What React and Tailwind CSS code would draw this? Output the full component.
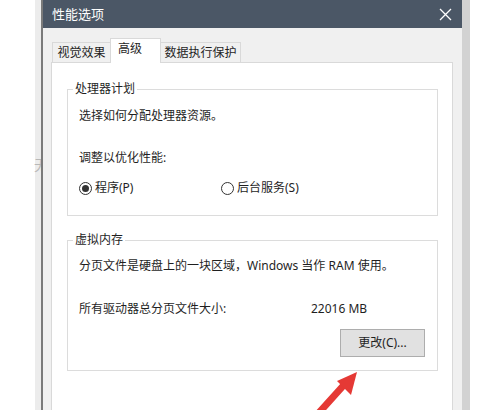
export default function App() {
  const font = { fontFamily: '"Noto Sans", "Noto Sans CJK SC", sans-serif' };
  return (
    <div className="relative w-[501px] h-[410px] overflow-hidden bg-white flex text-[12px] text-[#1f1f1f]" style={font}>
      {/* background strip left of the window */}
      <div className="w-[35px] shrink-0 bg-white" />
      <div className="w-[6px] shrink-0 bg-[#ececec]" />
      <div className="w-[2px] shrink-0 bg-[#7a7a7a]" />

      {/* window */}
      <div className="w-[419px] shrink-0 flex flex-col bg-[#f0f0f0]">
        {/* title bar */}
        <div className="h-[28px] shrink-0 bg-[#4b5766] flex items-center justify-between pl-[9px] pr-[9px]">
          <span className="text-white text-[13px] leading-none">性能选项</span>
          <svg width="13" height="13" viewBox="0 0 13 13" className="mr-[1px]">
            <path d="M1 1 L12 12 M12 1 L1 12" stroke="#ffffff" strokeWidth="1.3" />
          </svg>
        </div>

        <div className="flex-1 flex flex-col pl-[8px] pr-[9px]">
          {/* tabs */}
          <div className="flex items-end pt-[10px] pl-[1px] h-[34px] shrink-0">
            <div className="h-[20px] w-[58px] border border-r-0 border-b-0 border-[#d9d9d9] bg-[#f0f0f0] flex items-center justify-center leading-none">
              视觉效果
            </div>
            <div className="relative z-10 h-[25px] w-[51px] -mb-px border border-b-0 border-[#d9d9d9] bg-white flex items-center pl-[7px] pb-[4px] leading-none">
              高级
            </div>
            <div className="h-[20px] w-[80px] border border-l-0 border-b-0 border-[#d9d9d9] bg-[#f0f0f0] flex items-center justify-center leading-none">
              数据执行保护
            </div>
          </div>

          {/* panel */}
          <div className="flex-1 bg-white border border-b-0 border-[#d9d9d9] pl-[15px] pr-[14px] pt-[26px]">
            {/* processor scheduling */}
            <div className="relative border border-[#dcdcdc] h-[127px] pl-[11px] pt-[18px]">
              <span className="absolute -top-[9px] left-[5px] bg-white px-[2px] leading-[16px]">处理器计划</span>
              <div className="leading-[16px]">选择如何分配处理器资源。</div>
              <div className="leading-[16px] mt-[26px]">调整以优化性能:</div>
              <div className="flex items-center mt-[14px] leading-[16px]">
                <div className="flex items-center gap-[3px] w-[142px]">
                  <span className="w-[13px] h-[13px] rounded-full border border-[#333] flex items-center justify-center">
                    <span className="w-[7px] h-[7px] rounded-full bg-[#333]" />
                  </span>
                  <span>程序(P)</span>
                </div>
                <div className="flex items-center gap-[3px]">
                  <span className="w-[13px] h-[13px] rounded-full border border-[#333]" />
                  <span>后台服务(S)</span>
                </div>
              </div>
            </div>

            {/* virtual memory */}
            <div className="relative border border-[#dcdcdc] h-[131px] mt-[24px] pl-[11px] pt-[17px]">
              <span className="absolute -top-[9px] left-[5px] bg-white px-[2px] leading-[16px]">虚拟内存</span>
              <div className="leading-[16px]">分页文件是硬盘上的一块区域，Windows 当作 RAM 使用。</div>
              <div className="flex leading-[16px] mt-[27px]">
                <span className="w-[232px]">所有驱动器总分页文件大小:</span>
                <span>22016 MB</span>
              </div>
              <div className="flex justify-end pr-[12px] mt-[12px]">
                <button className="w-[85px] h-[28px] bg-[#e1e1e1] border border-[#adadad] leading-none text-[12px] text-[#1f1f1f]">
                  更改(C)...
                </button>
              </div>
            </div>
          </div>
        </div>
      </div>

      <div className="w-[8px] shrink-0 bg-[#d2d2d2]" />
      <div className="flex-1 bg-white" />

      {/* faint text behind the window */}
      <div className="absolute left-[34px] top-[156px] w-[7px] h-[18px] overflow-hidden text-[14px] leading-[18px] text-[#b8b8b8]">
        无
      </div>

      {/* red annotation arrow */}
      <svg className="absolute left-0 top-0" width="501" height="410" viewBox="0 0 501 410">
        <path d="M316 416 L343 386" stroke="#e53935" strokeWidth="7" strokeLinecap="round" />
        <polygon points="357,372 337,381 351,395" fill="#e53935" />
      </svg>
    </div>
  );
}
